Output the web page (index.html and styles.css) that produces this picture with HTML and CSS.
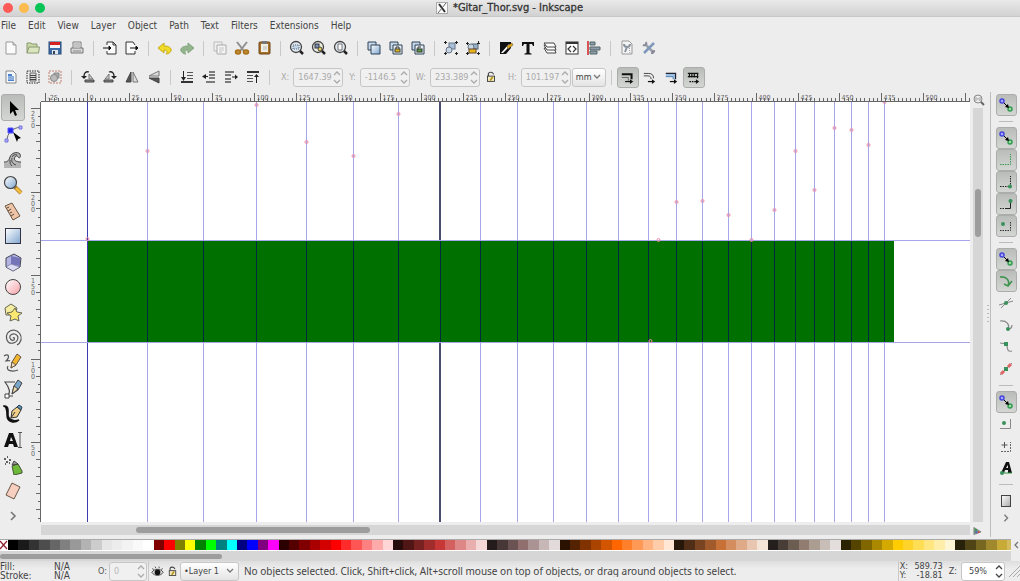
FILE: index.html
```html
<!DOCTYPE html>
<html lang="en">
<head>
<meta charset="utf-8">
<title>*Gitar_Thor.svg - Inkscape</title>
<link rel="stylesheet" href="styles.css">
</head>
<body>
<svg class="defs" aria-hidden="true">
<defs>
<linearGradient id="gBlue" x1="0" y1="0" x2="1" y2="1"><stop offset="0" stop-color="#fff"/><stop offset="1" stop-color="#7fa6cf"/></linearGradient>
<linearGradient id="gGrey" x1="0" y1="0" x2="1" y2="1"><stop offset="0" stop-color="#fff"/><stop offset="1" stop-color="#aaa"/></linearGradient>
<linearGradient id="gPink" x1="0" y1="0" x2="1" y2="1"><stop offset="0" stop-color="#fff"/><stop offset="1" stop-color="#f7a0a8"/></linearGradient>
</defs>
<symbol id="new" viewBox="0 0 16 16"><path d="M3 2h7l3 3v9H3z" fill="#fbfbfb" stroke="#999"/><path d="M10 2v3h3" fill="#ddd" stroke="#999"/></symbol>
<symbol id="open" viewBox="0 0 16 16"><path d="M2 13V3h4l1 1h5v3" fill="#c9d8a8" stroke="#8a9a70"/><path d="M2 13l2-6h10.500l-1 6z" fill="#dbe6c0" stroke="#8a9a70"/></symbol>
<symbol id="save" viewBox="0 0 16 16"><rect x="2" y="2" width="12" height="12" fill="#3c6ca8" stroke="#274a78"/><rect x="3" y="2" width="10" height="3" fill="#d62020"/><rect x="3" y="5" width="10" height="3" fill="#f4f4f4"/><rect x="5" y="10" width="6" height="4" fill="#dfe6ee"/><rect x="6" y="11" width="2" height="3" fill="#345"/></symbol>
<symbol id="print" viewBox="0 0 16 16"><path d="M4 8V2h8v6" fill="#fff" stroke="#777"/><path d="M2 8h12v5H2z" fill="#d8d8d8" stroke="#777"/><path d="M5 4h6M5 6h6M4 11h8" stroke="#888"/></symbol>
<symbol id="import" viewBox="0 0 16 16"><path d="M5 5V2h6l3 3v9H5v-3" fill="#fafafa" stroke="#333"/><path d="M11 2v3h3" fill="none" stroke="#333"/><path d="M1 8h7M7 6l2 2-2 2z" fill="#111" stroke="#111"/></symbol>
<symbol id="export" viewBox="0 0 16 16"><path d="M11 5L9 2H2v12h9v-3" fill="#fafafa" stroke="#333"/><path d="M6 8h7M12 6l2 2-2 2z" fill="#111" stroke="#111"/></symbol>
<symbol id="undo" viewBox="0 0 16 16"><path d="M1 8l6-5v3c5 0 8 2 7 5-1 2-3 3-5 3 2-2 1-4-2-4v3z" fill="#f0dc28" stroke="#c9ab1a"/></symbol>
<symbol id="redo" viewBox="0 0 16 16"><path d="M15 8L9 3v3C4 6 1 8 2 11c1 2 3 3 5 3-2-2-1-4 2-4v3z" fill="#93b58c" stroke="#86a580"/></symbol>
<symbol id="copy" viewBox="0 0 16 16"><path d="M2 2h8v9H2z" fill="#eee" stroke="#bbb"/><path d="M5 5h9v9H5z" fill="#f5f5f5" stroke="#aaa"/><path d="M7 8h5M7 10h5M7 12h3" stroke="#c4c4c4"/></symbol>
<symbol id="cut" viewBox="0 0 16 16"><path d="M3 2l7 9M13 2l-7 9" stroke="#909090" stroke-width="2"/><ellipse cx="4" cy="12" rx="2.500" ry="2" fill="#c08a30" stroke="#a87018" stroke-width="1.500"/><ellipse cx="12" cy="12" rx="2.500" ry="2" fill="#c08a30" stroke="#a87018" stroke-width="1.500"/></symbol>
<symbol id="paste" viewBox="0 0 16 16"><rect x="3" y="2" width="11" height="12" rx="1" fill="#a8722c" stroke="#6e4716"/><rect x="5" y="4" width="7" height="8" fill="#f0ede4"/><rect x="6" y="1" width="5" height="3" fill="#777"/><path d="M7 7h4M7 9h4" stroke="#bbb"/></symbol>
<symbol id="zoomsel" viewBox="0 0 16 16"><circle cx="7" cy="7" r="5.500" fill="#dfe8f2" stroke="#444" stroke-width="1.300"/><path d="M11 11l3 3" stroke="#222" stroke-width="2.500"/><path d="M4 5h6v4H4z" fill="#c3d2e4" stroke="#567" stroke-dasharray="1 1"/></symbol>
<symbol id="zoomdraw" viewBox="0 0 16 16"><circle cx="7" cy="7" r="5.500" fill="#eef0e0" stroke="#444" stroke-width="1.300"/><path d="M11 11l3 3" stroke="#222" stroke-width="2.500"/><rect x="4" y="4" width="4" height="4" fill="#7d8fb0" stroke="#334"/><circle cx="9" cy="9" r="2" fill="#e8cf50" stroke="#444"/></symbol>
<symbol id="zoompage" viewBox="0 0 16 16"><circle cx="7" cy="7" r="5.500" fill="#dfe8f2" stroke="#444" stroke-width="1.300"/><path d="M11 11l3 3" stroke="#222" stroke-width="2.500"/><path d="M5 4h4v6H5z" fill="#fff" stroke="#777"/></symbol>
<symbol id="dup" viewBox="0 0 16 16"><path d="M2 2h8v8H2z" fill="#c8d8e8" stroke="#2c4258"/><path d="M5 5h9v9H5z" fill="url(#gBlue)" stroke="#2c4258"/></symbol>
<symbol id="clone" viewBox="0 0 16 16"><path d="M2 2h8v8H2z" fill="#c8d8e8" stroke="#2c4258"/><path d="M5 5h9v9H5z" fill="#e8eef4" stroke="#2c4258"/><path d="M8 9V7h3v2" fill="none" stroke="#333"/><rect x="7" y="9" width="5" height="3" fill="#e8b820" stroke="#443"/></symbol>
<symbol id="unlink" viewBox="0 0 16 16"><path d="M2 2h8v8H2z" fill="#c8d8e8" stroke="#2c4258"/><path d="M5 5h9v9H5z" fill="#e8eef4" stroke="#2c4258"/><path d="M8 9V7h3" fill="none" stroke="#333"/><rect x="7" y="9" width="5" height="3" fill="#64a04c" stroke="#232"/></symbol>
<symbol id="group" viewBox="0 0 16 16"><rect x="6" y="3" width="6" height="6" fill="#a9c0d8" stroke="#678"/><circle cx="6" cy="10" r="3" fill="#c8d6e4" stroke="#678"/><path d="M1 2.500h3M2.500 1v3M12 2.500h3M13.500 1v3M1 13.500h3M2.500 12v3M12 13.500h3M13.500 12v3" stroke="#222"/></symbol>
<symbol id="ungroup" viewBox="0 0 16 16"><rect x="7" y="4" width="6" height="5" fill="#9ab0c8" stroke="#567"/><circle cx="6" cy="7" r="3" fill="#c8d6e4" stroke="#678"/><rect x="4" y="9" width="7" height="4" fill="#e8b818" stroke="#643"/><path d="M1 3.500h3M2.500 2v3M12 3.500h3M13.500 1v3M1 13.500h3M2.500 12v3M12 13.500h3M13.500 12v3" stroke="#222"/></symbol>
<symbol id="fill" viewBox="0 0 16 16"><path d="M2 2h11v6L8 14H2z" fill="#111"/><path d="M3 13L11 4l1 2-7 7z" fill="#fff"/><path d="M9 6l5-3 1 2-5 4z" fill="#e0a820" stroke="#542" stroke-width=".5"/></symbol>
<symbol id="textdlg" viewBox="0 0 16 16"><path d="M2 2h12v4h-1L12 4H9.500v9l2 .5v1h-7v-1l2-.5V4H4L3 6H2z" fill="#111"/></symbol>
<symbol id="layers" viewBox="0 0 16 16"><g fill="#fff" stroke="#444"><path d="M2 8l3 5h9l-2-5z"/><path d="M2 5l3 5h9l-2-5z"/><path d="M2 3l3 4h9l-2-4z"/></g></symbol>
<symbol id="xml" viewBox="0 0 16 16"><rect x="2" y="2" width="12" height="12" fill="#fff" stroke="#333"/><path d="M2 3h12" stroke="#333" stroke-width="2"/><path d="M7 6L4 9l3 3M9 6l3 3-3 3" fill="none" stroke="#333" stroke-width="1.200"/></symbol>
<symbol id="align" viewBox="0 0 16 16"><path d="M2 1v14" stroke="#c22" stroke-width="1.500"/><path d="M4 2h5v3H4zM4 7h10v3H4zM4 11h7v3H4z" fill="#8d9cac" stroke="#566"/></symbol>
<symbol id="docprefs" viewBox="0 0 16 16"><path d="M3 1h7l3 3v10H3z" fill="#f4f4f4" stroke="#999"/><path d="M5 4c0 4 6 4 6 0M8 7l-2 5" fill="none" stroke="#8894a0" stroke-width="2"/><path d="M10 6l1 7" stroke="#999" stroke-dasharray="1 1"/></symbol>
<symbol id="prefs" viewBox="0 0 16 16"><path d="M4 4l9 9" stroke="#9aa2ac" stroke-width="2.500"/><path d="M13 3L3 13" stroke="#8098bc" stroke-width="2.500"/><path d="M2 5c2 1 4-1 3-3M11 14c0-2 1-3 3-3" fill="none" stroke="#889" stroke-width="2"/></symbol>
<symbol id="selall" viewBox="0 0 16 16"><path d="M3 2h7l3 3v9H3z" fill="#f4f7fb" stroke="#888"/><path d="M5 5h4v2h2v5H5z" fill="#4d82cf"/><path d="M5 8h6M5 10h6" stroke="#cde"/></symbol>
<symbol id="sellayers" viewBox="0 0 16 16"><path d="M2 2h12v12H2z" fill="none" stroke="#222" stroke-dasharray="1.500 1"/><path d="M5 4h6v8H5z" fill="#ddd" stroke="#666"/><path d="M5 6.500h6M5 8.500h6M5 10.500h6" stroke="#444"/></symbol>
<symbol id="desel" viewBox="0 0 16 16"><path d="M2 2h12v12H2z" fill="none" stroke="#c08070" stroke-dasharray="2 1"/><path d="M7 4h5v5H7z" fill="#aaa" stroke="#888"/><circle cx="7" cy="9" r="3.500" fill="#bcbcbc" stroke="#888"/></symbol>
<symbol id="rotl" viewBox="0 0 16 16"><path d="M5 11h9v2H5z" fill="#888" stroke="#444"/><path d="M9 10V5l4 5z" fill="#ccc" stroke="#777"/><path d="M9 3C6 2 4 4 4 7" fill="none" stroke="#222" stroke-width="1.300"/><path d="M1 7h6l-3 3z" fill="#222"/></symbol>
<symbol id="rotr" viewBox="0 0 16 16"><path d="M2 11h9v2H2z" fill="#888" stroke="#444"/><path d="M7 10V5l-4 5z" fill="#ccc" stroke="#777"/><path d="M7 3c3-1 5 1 5 4" fill="none" stroke="#222" stroke-width="1.300"/><path d="M9 7h6l-3 3z" fill="#222"/></symbol>
<symbol id="fliph" viewBox="0 0 16 16"><path d="M7 3v10H2z" fill="#555" stroke="#444"/><path d="M9 3v10h5z" fill="#ddd" stroke="#777"/></symbol>
<symbol id="flipv" viewBox="0 0 16 16"><path d="M13 2v5H3z" fill="#ddd" stroke="#777"/><path d="M13 14V9H3z" fill="#555" stroke="#444"/></symbol>
<symbol id="bottom" viewBox="0 0 16 16"><path d="M4.500 2v7" stroke="#222"/><path d="M2 8h5l-2.500 4z" fill="#222"/><path d="M8 3.500h6M8 6.500h6M8 9.500h6" stroke="#555"/><path d="M2 13h12" stroke="#333" stroke-width="2"/></symbol>
<symbol id="lower" viewBox="0 0 16 16"><path d="M8 3h6M8 6h6M8 9h6M5 13h9" stroke="#555" stroke-width="1.500"/><path d="M7 7.500H4" stroke="#222"/><path d="M5 5v5L1 7.500z" fill="#222"/></symbol>
<symbol id="raise" viewBox="0 0 16 16"><path d="M2 3h9M2 6h6M2 10h6M2 13h6" stroke="#555" stroke-width="1.500"/><path d="M9 8h4" stroke="#222"/><path d="M12 5.500v5L15 8z" fill="#222"/></symbol>
<symbol id="top" viewBox="0 0 16 16"><path d="M2 3h12" stroke="#333" stroke-width="2"/><path d="M2 6.500h6M2 9.500h6M2 12.500h6" stroke="#555"/><path d="M11.500 7v7" stroke="#222"/><path d="M9 8h5l-2.500-3z" fill="#222"/></symbol>
<symbol id="lock" viewBox="0 0 16 16"><path d="M5 7V4c1-2 5-2 6 1" fill="none" stroke="#444" stroke-width="1.300"/><rect x="4" y="7" width="8" height="6" fill="#f2ecc0" stroke="#333"/><path d="M7 12l3-4" stroke="#b89018" stroke-width="2"/></symbol>
<symbol id="eye" viewBox="0 0 16 16"><path d="M1 9c3-5 11-5 14 0-3 5-11 5-14 0z" fill="#ddd" stroke="#333"/><circle cx="8" cy="9" r="3.500" fill="#111"/><path d="M3 6L2 4M6 4L5 2M10 4V2M13 6l1-2" stroke="#333"/></symbol>
<symbol id="t1" viewBox="0 0 16 16"><path d="M1 4h12v6" fill="none" stroke="#111" stroke-width="2.500"/><path d="M1 8h8v4" fill="none" stroke="#555"/><path d="M5 13h8" stroke="#111" stroke-width="1.500"/><path d="M11 10l4 3-4 3z" fill="#111"/></symbol>
<symbol id="t2" viewBox="0 0 16 16"><path d="M1 3h6c4 0 6 2 6 6M1 6h5c3 0 4 2 4 4" fill="none" stroke="#444" stroke-width="1.200"/><path d="M6 13h7" stroke="#111" stroke-width="1.500"/><path d="M11 10l4 3-4 3z" fill="#111"/></symbol>
<symbol id="t3" viewBox="0 0 16 16"><path d="M1 3h12v7h-3V7H1z" fill="#9cc0e4"/><path d="M1 3h12v7" fill="none" stroke="#223" stroke-width="1.500"/><path d="M1 7h9v3" fill="none" stroke="#47a"/><path d="M6 13h7" stroke="#111" stroke-width="1.500"/><path d="M11 10l4 3-4 3z" fill="#111"/></symbol>
<symbol id="t4" viewBox="0 0 16 16"><path d="M1 3h13M1 7h13M3 2v6M6 2v6M9 2v6M13 2v7" stroke="#111" stroke-width="1.500"/><path d="M3 13h9" stroke="#111" stroke-width="1.500" stroke-dasharray="2 1"/><path d="M11 10l4 3-4 3z" fill="#111"/></symbol>
<symbol id="arrow" viewBox="0 0 20 20"><path d="M7 3v13l3-3 2 5 2-1-2-5h4z" fill="#000"/></symbol>
<symbol id="node" viewBox="0 0 20 20"><path d="M4 17C4 9 9 4 18 3" fill="none" stroke="#666"/><path d="M2 15h3v3H2zM16 2h3v3h-3z" fill="#aaf" stroke="#77d"/><path d="M5 4h5v5H5z" fill="#22e" stroke="#55f"/><path d="M10 8l8 6-3 1-1 3z" fill="#000"/></symbol>
<symbol id="tweak" viewBox="0 0 20 20"><path d="M1 12c4 0 5-2 6-5 1-4 7-6 10-3 1 2 0 4-1 4-1-2-3-3-4-1-2 3 1 5 6 5v6H1z" fill="#b4b4b4"/><path d="M1 12c4 0 5-2 6-5 1-4 7-6 10-3 1 2 0 4-1 4-1-2-3-3-4-1-2 3 1 5 6 5M9 7c1-2 3-3 5-2M9 8c-1 4 1 6 4 7M7 10c0 3 0 4 2 6" fill="none" stroke="#444"/></symbol>
<symbol id="zoomtool" viewBox="0 0 20 20"><path d="M12 12l6 6" stroke="#9a7430" stroke-width="4"/><path d="M13 13l5 5" stroke="#f5bd3a" stroke-width="3"/><circle cx="7.500" cy="7.500" r="6" fill="url(#gBlue)" stroke="#444" stroke-width="1.200"/></symbol>
<symbol id="measure" viewBox="0 0 20 20"><path d="M2 5l7-3 8 13-7 4z" fill="#eec4a8" stroke="#654"/><path d="M4 7l2-1M5 10l3-2M7 12l2-1M8 15l3-2" stroke="#543"/></symbol>
<symbol id="rect" viewBox="0 0 20 20"><rect x="2.500" y="2.500" width="15" height="15" fill="url(#gBlue)" stroke="#334"/></symbol>
<symbol id="box3d" viewBox="0 0 20 20"><path d="M3 6l8-4 7 4-1 9-7 4-7-4z" fill="#b4b4e4" stroke="#445"/><path d="M8 12V4l9 2v8z" fill="#7474b8"/><path d="M3 15l5-3 9 3-7 4z" fill="#dcdcf4" stroke="#557" stroke-width=".5"/></symbol>
<symbol id="ellipse" viewBox="0 0 20 20"><circle cx="10" cy="10" r="7.500" fill="url(#gPink)" stroke="#444"/></symbol>
<symbol id="star" viewBox="0 0 20 20"><path d="M2 6l6-4 6 4-2 7H3z" fill="#f4eda0" stroke="#665"/><path d="M12 6l2 4 5 1-4 3 1 5-4-2-5 2 1-5-4-3 5-1z" fill="#fbe870" stroke="#665"/></symbol>
<symbol id="spiral" viewBox="0 0 20 20"><path d="M10 10c1-1 2 0 1 2-2 1-5-1-4-4 2-4 8-2 8 2-1 6-9 7-11 2-2-6 2-10 7-10 5 1 8 5 7 10-1 3-2 4-4 5" fill="none" stroke="#555" stroke-width="1.200"/></symbol>
<symbol id="pencil" viewBox="0 0 20 20"><path d="M1 3c5-3 6 1 2 5 2 0 3-1 4 0M5 13c-3 5 5 6 10 4" fill="none" stroke="#555" stroke-width="1.200"/><path d="M8 15l1-6 5-8 4 3-5 8z" fill="#f3b52e" stroke="#654"/><path d="M8 15l1-6 4 3z" fill="#f5e0c0" stroke="#654"/></symbol>
<symbol id="pen" viewBox="0 0 20 20"><path d="M3 17C9 15 6 8 2 3h10" fill="none" stroke="#444" stroke-width="1.200"/><path d="M2 15h4v4H2zM6 17h4" fill="#fff" stroke="#444"/><path d="M9 15l2-8 4-6 4 3-4 7z" fill="#7aa5cc" stroke="#444"/><path d="M9 15l2-8 4 3z" fill="#eee0b0" stroke="#444"/></symbol>
<symbol id="calli" viewBox="0 0 20 20"><path d="M1 2c5-1 4 5 4 9s4 7 11 5c-5 4-12 2-12-5 0-4 0-8-3-9z" fill="#111" stroke="#111" stroke-width="1.500"/><path d="M8 14l1-7 5-4 4 3-4 7z" fill="#f0d088" stroke="#333"/><path d="M14 3l2-2 3 2-1 3z" fill="#5a8fb0" stroke="#345"/><path d="M8 14l4-6" stroke="#333"/></symbol>
<symbol id="texttool" viewBox="0 0 20 20"><path d="M1 17L6 3h4l5 14h-4l-1-3H6l-1 3zM7 11h3L8 7z" fill="#111"/><path d="M15 2.500h4M17 2v16M15 17.500h4" stroke="#555"/></symbol>
<symbol id="spray" viewBox="0 0 20 20"><path d="M9 11l6-2 4 7v2l-8 2z" fill="#6eb83a" stroke="#453"/><path d="M9 10l2-4 4 3z" fill="#999" stroke="#444"/><path d="M1 4h2M4 2h1M3 7h2M6 5h2M2 9h1M6 8h1" stroke="#333" stroke-width="1.500"/></symbol>
<symbol id="eraser" viewBox="0 0 20 20"><path d="M9 2l8 4-6 12-8-4z" fill="#f7cfc0" stroke="#654"/></symbol>
<symbol id="more" viewBox="0 0 20 20"><path d="M8 6l4 4-4 4" fill="none" stroke="#777" stroke-width="1.600"/></symbol>
<symbol id="snap" viewBox="0 0 16 16"><circle cx="4" cy="4" r="2" fill="#aaf" stroke="#44d" stroke-width="1.500"/><circle cx="12" cy="12" r="2" fill="#9d9" stroke="#395" stroke-width="1.500"/><path d="M6 6l3 3" stroke="#000"/><path d="M7 10l4 1-1-4z" fill="#000"/></symbol>
<symbol id="sbox" viewBox="0 0 16 16"><path d="M2 12.500h10.500V2" fill="none" stroke="#3c9a50" stroke-dasharray="1.500 1"/></symbol>
<symbol id="sedge" viewBox="0 0 16 16"><path d="M2 12.500h10.500V2" fill="none" stroke="#222" stroke-dasharray="1.500 1"/><circle cx="12" cy="12.500" r="2" fill="#38905a"/></symbol>
<symbol id="scorner" viewBox="0 0 16 16"><path d="M2 12.500h6" stroke="#222" stroke-dasharray="1.500 1"/><path d="M8 12.500h4.500V3" fill="none" stroke="#222"/><circle cx="12.500" cy="5" r="2" fill="#38905a"/></symbol>
<symbol id="smid" viewBox="0 0 16 16"><path d="M2 12.500h10.500V3" fill="none" stroke="#333" stroke-dasharray="1.500 1"/><circle cx="5" cy="6" r="2" fill="#38905a"/></symbol>
<symbol id="spath" viewBox="0 0 16 16"><path d="M2 4c7-1 10 4 8 9M6 11l4 2 4-5" fill="none" stroke="#3f9450" stroke-width="1.600"/></symbol>
<symbol id="sint" viewBox="0 0 16 16"><path d="M3 13L13 3M1 10l14-4" stroke="#888"/><circle cx="8" cy="8" r="2" fill="#38905a"/></symbol>
<symbol id="scusp" viewBox="0 0 16 16"><path d="M2 4c7-1 10 4 8 8 2 0 4-1 4-4" fill="none" stroke="#888" stroke-width="1.200"/><circle cx="10" cy="12" r="2" fill="#38905a"/></symbol>
<symbol id="ssmooth" viewBox="0 0 16 16"><path d="M2 4l7 1c0 6 1 8 5 7" fill="none" stroke="#888" stroke-width="1.200"/><path d="M6 3h4v4H6z" fill="#38905a"/></symbol>
<symbol id="sline" viewBox="0 0 16 16"><path d="M2 14L14 2" stroke="#888"/><path d="M3 13l3-3M10 6l3-3" stroke="#d66" stroke-width="3"/><path d="M6 6h4v4H6z" fill="#38905a"/></symbol>
<symbol id="scenter" viewBox="0 0 16 16"><path d="M2 12.500h10.500V3" fill="none" stroke="#888"/><circle cx="6" cy="7" r="2" fill="#38905a"/></symbol>
<symbol id="srot" viewBox="0 0 16 16"><path d="M3 13.500h9.500V4" fill="none" stroke="#666" stroke-dasharray="2 1"/><path d="M6.500 4v6M3.500 7h6" stroke="#555"/></symbol>
<symbol id="stext" viewBox="0 0 16 16"><path d="M3 13L8 2h3l3 11h-4v-3H7l-1 3zM8 8h2V5z" fill="#111"/><path d="M3 13h11" stroke="#2f9440"/><circle cx="4" cy="13" r="2" fill="#38905a"/></symbol>
<symbol id="spage" viewBox="0 0 16 16"><rect x="3.500" y="2.500" width="9" height="11" fill="url(#gGrey)" stroke="#444"/></symbol>
<symbol id="up" viewBox="0 0 8 6"><path d="M1 5l3-3 3 3" fill="none" stroke="currentColor" stroke-width="1.300"/></symbol>
<symbol id="down" viewBox="0 0 8 6"><path d="M1 1l3 3 3-3" fill="none" stroke="currentColor" stroke-width="1.300"/></symbol>
</svg>

<header class="titlebar">
  <div class="lights"><button class="light red" aria-label="Close"></button><button class="light amber" aria-label="Minimize"></button><button class="light green" aria-label="Zoom"></button></div>
  <h1 class="title"><svg class="xicon" viewBox="0 0 12 12"><rect x=".5" y=".5" width="11" height="11" fill="#fafafa" stroke="#aaa"/><path d="M3 2l6 8" stroke="#333" stroke-width="2"/><path d="M10 1L2 11" stroke="#666"/></svg>*Gitar_Thor.svg - Inkscape</h1>
</header>

<nav class="menubar">
  <button>File</button><button>Edit</button><button>View</button><button>Layer</button><button>Object</button><button>Path</button><button>Text</button><button>Filters</button><button>Extensions</button><button>Help</button>
</nav>

<div class="toolbar commands">
  <button aria-label="New"><svg><use href="#new"/></svg></button><button aria-label="Open"><svg><use href="#open"/></svg></button><button aria-label="Save"><svg><use href="#save"/></svg></button><button aria-label="Print"><svg><use href="#print"/></svg></button><i class="sep"></i>
  <button aria-label="Import"><svg><use href="#import"/></svg></button><button aria-label="Export"><svg><use href="#export"/></svg></button><i class="sep"></i>
  <button aria-label="Undo"><svg><use href="#undo"/></svg></button><button aria-label="Redo"><svg><use href="#redo"/></svg></button><i class="sep"></i>
  <button aria-label="Copy"><svg><use href="#copy"/></svg></button><button aria-label="Cut"><svg><use href="#cut"/></svg></button><button aria-label="Paste"><svg><use href="#paste"/></svg></button><i class="sep"></i>
  <button aria-label="Zoom selection"><svg><use href="#zoomsel"/></svg></button><button aria-label="Zoom drawing"><svg><use href="#zoomdraw"/></svg></button><button aria-label="Zoom page"><svg><use href="#zoompage"/></svg></button><i class="sep"></i>
  <button aria-label="Duplicate"><svg><use href="#dup"/></svg></button><button aria-label="Clone"><svg><use href="#clone"/></svg></button><button aria-label="Unlink clone"><svg><use href="#unlink"/></svg></button><i class="sep"></i>
  <button aria-label="Group"><svg><use href="#group"/></svg></button><button aria-label="Ungroup"><svg><use href="#ungroup"/></svg></button><i class="sep"></i>
  <button aria-label="Fill and stroke"><svg><use href="#fill"/></svg></button><button aria-label="Text and font"><svg><use href="#textdlg"/></svg></button><button aria-label="Layers"><svg><use href="#layers"/></svg></button><button aria-label="XML editor"><svg><use href="#xml"/></svg></button><button aria-label="Align"><svg><use href="#align"/></svg></button><i class="sep"></i>
  <button aria-label="Document properties"><svg><use href="#docprefs"/></svg></button><button aria-label="Preferences"><svg><use href="#prefs"/></svg></button>
</div>

<div class="toolbar controls">
  <button aria-label="Select all"><svg><use href="#selall"/></svg></button><button aria-label="Select in all layers"><svg><use href="#sellayers"/></svg></button><button aria-label="Deselect"><svg><use href="#desel"/></svg></button><i class="sep"></i>
  <button aria-label="Rotate left"><svg><use href="#rotl"/></svg></button><button aria-label="Rotate right"><svg><use href="#rotr"/></svg></button><button aria-label="Flip horizontal"><svg><use href="#fliph"/></svg></button><button aria-label="Flip vertical"><svg><use href="#flipv"/></svg></button><i class="sep"></i>
  <button aria-label="Lower to bottom"><svg><use href="#bottom"/></svg></button><button aria-label="Lower"><svg><use href="#lower"/></svg></button><button aria-label="Raise"><svg><use href="#raise"/></svg></button><button aria-label="Raise to top"><svg><use href="#top"/></svg></button><i class="sep"></i>
  <label class="field"><span>X:</span><span class="spin"><input value="1647.39" disabled><span class="arrows"><svg><use href="#up"/></svg><svg><use href="#down"/></svg></span></span></label>
  <label class="field"><span>Y:</span><span class="spin"><input value="-1146.5" disabled><span class="arrows"><svg><use href="#up"/></svg><svg><use href="#down"/></svg></span></span></label>
  <label class="field"><span>W:</span><span class="spin"><input value="233.389" disabled><span class="arrows"><svg><use href="#up"/></svg><svg><use href="#down"/></svg></span></span></label>
  <button class="lockbtn" aria-label="Lock ratio"><svg><use href="#lock"/></svg></button>
  <label class="field"><span>H:</span><span class="spin"><input value="101.197" disabled><span class="arrows"><svg><use href="#up"/></svg><svg><use href="#down"/></svg></span></span></label>
  <span class="drop unit"><select aria-label="Unit"><option>mm</option></select><svg><use href="#down"/></svg></span><i class="sep"></i>
  <button class="affect on" aria-label="Scale stroke"><svg><use href="#t1"/></svg></button><button class="affect" aria-label="Scale corners"><svg><use href="#t2"/></svg></button><button class="affect" aria-label="Move gradients"><svg><use href="#t3"/></svg></button><button class="affect on" aria-label="Move patterns"><svg><use href="#t4"/></svg></button>
</div>

<main class="work">
  <div class="toolbox">
    <button class="on" aria-label="Select"><svg><use href="#arrow"/></svg></button><button aria-label="Node"><svg><use href="#node"/></svg></button><button aria-label="Tweak"><svg><use href="#tweak"/></svg></button><button aria-label="Zoom"><svg><use href="#zoomtool"/></svg></button><button aria-label="Measure"><svg><use href="#measure"/></svg></button><button aria-label="Rectangle"><svg><use href="#rect"/></svg></button><button aria-label="3D box"><svg><use href="#box3d"/></svg></button><button aria-label="Ellipse"><svg><use href="#ellipse"/></svg></button><button aria-label="Star"><svg><use href="#star"/></svg></button><button aria-label="Spiral"><svg><use href="#spiral"/></svg></button><button aria-label="Pencil"><svg><use href="#pencil"/></svg></button><button aria-label="Pen"><svg><use href="#pen"/></svg></button><button aria-label="Calligraphy"><svg><use href="#calli"/></svg></button><button aria-label="Text"><svg><use href="#texttool"/></svg></button><button aria-label="Spray"><svg><use href="#spray"/></svg></button><button aria-label="Eraser"><svg><use href="#eraser"/></svg></button><button aria-label="More tools"><svg><use href="#more"/></svg></button>
  </div>
  <svg class="hruler" id="hruler"></svg>
  <svg class="vruler" id="vruler"></svg>
  <svg class="canvas" id="canvas"></svg>
  <svg class="zoomcorner" viewBox="0 0 12 12"><circle cx="5" cy="5" r="4" fill="#eee" stroke="#888"/><path d="M3 3v4M5 4v2M7 3v4" stroke="#999"/><path d="M8 8l3 3" stroke="#666" stroke-width="2"/></svg>
  <div class="vscroll"><div class="vtrack"><i class="before"></i><i class="thumb"></i><i class="after"></i></div><div class="grip"></div></div>
  <div class="hscroll"><i class="before"></i><i class="thumb"></i><i class="after"></i></div>
  <svg class="cms" viewBox="0 0 10 10"><path d="M1 1l8 5-8 3z" fill="#7a9a88" stroke="#888"/><path d="M2 2l3 2-3 2z" fill="#3a9a50"/><path d="M6 5l2 1-3 2z" fill="#d45"/><path d="M2 6l3-1-1 3z" fill="#55c"/></svg>
  <div class="snapbar">
    <button class="on" aria-label="Enable snapping"><svg><use href="#snap"/></svg></button><i class="hsep"></i>
    <button class="on" aria-label="Snap bounding boxes"><svg><use href="#snap"/></svg></button><button class="on" aria-label="Snap box edges"><svg><use href="#sbox"/></svg></button><button class="on" aria-label="Snap box corners"><svg><use href="#sedge"/></svg></button><button class="on" aria-label="Snap edge midpoints"><svg><use href="#scorner"/></svg></button><button class="on" aria-label="Snap box centers"><svg><use href="#smid"/></svg></button><i class="hsep"></i>
    <button class="on" aria-label="Snap nodes"><svg><use href="#snap"/></svg></button><button class="on" aria-label="Snap paths"><svg><use href="#spath"/></svg></button><button aria-label="Snap intersections"><svg><use href="#sint"/></svg></button><button aria-label="Snap cusp nodes"><svg><use href="#scusp"/></svg></button><button aria-label="Snap smooth nodes"><svg><use href="#ssmooth"/></svg></button><button aria-label="Snap line midpoints"><svg><use href="#sline"/></svg></button><i class="hsep"></i>
    <button class="on" aria-label="Snap others"><svg><use href="#snap"/></svg></button><button aria-label="Snap object centers"><svg><use href="#scenter"/></svg></button><button aria-label="Snap rotation centers"><svg><use href="#srot"/></svg></button><button aria-label="Snap text baseline"><svg><use href="#stext"/></svg></button><i class="hsep"></i>
    <button aria-label="Snap page border"><svg><use href="#spage"/></svg></button><button class="short" aria-label="More snapping"><svg><use href="#more"/></svg></button>
  </div>
</main>

<div class="palette">
  <div class="swatches" id="swatches"><svg class="none" viewBox="0 0 8 10"><path d="M0 1l7 8M7 1L0 9" stroke="#8c2030" stroke-width="1.200"/></svg></div>
  <button class="palmenu" aria-label="Palette menu"><svg viewBox="0 0 8 8"><path d="M6 1L3 4l3 3" fill="none" stroke="#777" stroke-width="1.300"/></svg></button>
  <div class="palscroll"><i class="thumb"></i></div>
</div>

<footer class="status">
  <dl class="style"><dt>Fill:</dt><dd>N/A</dd><dt>Stroke:</dt><dd>N/A</dd></dl>
  <label class="field opacity"><span>O:</span><span class="spin"><input value="0" disabled><span class="arrows"><svg><use href="#up"/></svg><svg><use href="#down"/></svg></span></span></label>
  <i class="sep"></i>
  <button aria-label="Layer visibility"><svg><use href="#eye"/></svg></button><button aria-label="Layer lock"><svg><use href="#lock"/></svg></button>
  <span class="drop layer"><select aria-label="Layer"><option>•Layer 1</option></select><svg><use href="#down"/></svg></span>
  <p class="message">No objects selected. Click, Shift+click, Alt+scroll mouse on top of objects, or drag around objects to select.</p>
  <i class="sep"></i>
  <dl class="coords"><dt>X:</dt><dd>589.73</dd><dt>Y:</dt><dd>-18.81</dd></dl>
  <label class="field zoom"><span>Z:</span><span class="spin"><input value="59%"><span class="arrows"><svg><use href="#up"/></svg><svg><use href="#down"/></svg></span></span></label>
  <svg class="resize" viewBox="0 0 12 12"><path d="M1 12L12 1M5 12l7-7M9 12l3-3" stroke="#aaa"/></svg>
</footer>
<script src="app.js"></script>
</body>
</html>
```
FILE: styles.css
```css
* { box-sizing: border-box; }
body { margin: 0; height: 100vh; display: flex; flex-direction: column; overflow: hidden; background: #ededed; color: #444; font-family: "DejaVu Sans Condensed", "DejaVu Sans", sans-serif; font-stretch: condensed; font-size: 10px; line-height: 12px; }
button, input, select { font: inherit; color: inherit; margin: 0; padding: 0; border: 0; background: none; }
button { display: flex; align-items: center; justify-content: center; }
.defs { position: absolute; width: 0; height: 0; }

.titlebar { flex: none; display: grid; grid-template-columns: 1fr auto 1fr; align-items: center; height: 17px; padding: 0 4px 0 3px; background: linear-gradient(#e9e9e9, #d2d2d2); border-bottom: 1px solid #c8c8c8; }
.lights { display: flex; gap: 6px; }
.light { width: 10px; height: 10px; border-radius: 50%; }
.red { background: #fc5b57; }
.amber { background: #fdbc4e; }
.green { background: #06c455; }
.title { display: flex; align-items: center; gap: 5px; margin: 0; font-size: 11px; font-weight: 400; color: #333; -webkit-text-stroke: .3px #333; }
.xicon { width: 12px; height: 12px; }

.menubar { flex: none; display: flex; gap: 12px; height: 17px; padding: 0 1px; }

.toolbar { flex: none; display: flex; align-items: center; height: 28px; }
.controls { height: 30px; }
.toolbar > button { width: 22px; height: 21px; }
.toolbar > button svg { width: 16px; height: 16px; }
.toolbar > .affect svg { width: 13px; height: 13px; }
.sep { flex: none; width: 1px; height: 15px; margin: 0 5px; background: #c9c9c9; }
.on { background: linear-gradient(#b9bcb9, #d4d6d4); border: 1px solid #aaadaa; border-radius: 3px; }

.field { display: flex; align-items: center; gap: 4px; margin-left: 6px; font-size: 9px; color: #aaa; }
.spin, .drop { display: flex; align-items: center; height: 19px; border: 1px solid #c6c6c6; border-radius: 3px; background: #f0f0f0; }
.spin { width: 50px; padding-left: 4px; }
.spin input { flex: 1; min-width: 0; width: 0; height: 17px; }
.arrows { display: flex; flex-direction: column; gap: 3px; margin: 0 1px; }
.arrows svg { width: 8px; height: 6px; }
.toolbar > .lockbtn svg { width: 14px; height: 14px; }
.drop { position: relative; background: linear-gradient(#fff, #e4e4e4); font-size: 9px; }
.drop select { appearance: none; width: 100%; height: 17px; padding: 0 3px; }
.drop svg { position: absolute; right: 4px; width: 8px; height: 6px; pointer-events: none; color: #777; }
.unit { width: 34px; margin-left: 1px; }

.work { flex: 1; min-height: 0; display: grid; grid-template-columns: 28px 13px minmax(0, 1fr) 20px 30px; grid-template-rows: 10px minmax(0, 1fr) 15px; }
.toolbox { grid-area: 1 / 1 / 4 / 2; display: flex; flex-direction: column; padding: 2px 3px 8px 1px; }
.toolbox button { flex: 1; }
.toolbox svg { width: 20px; height: 20px; }
.hruler { grid-area: 1 / 3; width: 100%; height: 100%; border-bottom: 1px solid #666; }
.vruler { grid-area: 2 / 2; width: 100%; height: 100%; border-right: 1px solid #666; }
.tick { stroke: #666; }
.num { font-size: 7px; fill: #666; }
.canvas { grid-area: 2 / 3; width: 100%; height: 100%; background: #fff; }
.guide { stroke: #a6a6ea; }
.inner { stroke: #002b40; }
.edge { stroke: #3c3cb0; }
.octave { stroke: #4c4c6c; stroke-width: 2; }
.anchor { fill: none; stroke: #ee8aa4; }
.zoomcorner { grid-area: 1 / 4; width: 12px; height: 12px; margin: 2px 0 0 3px; }
.vscroll { grid-area: 2 / 4; display: flex; justify-content: space-between; align-items: center; padding: 6px 1px 0 3px; }
.vtrack { width: 10px; height: 100%; display: flex; flex-direction: column; align-items: center; background: #d6d6d6; }
.vtrack .before { flex: 81; }
.vtrack .thumb { flex: 48; width: 6px; }
.vtrack .after { flex: 285; }
.thumb { border-radius: 3px; background: #9c9d9c; }
.grip { width: 2px; height: 20px; background: repeating-linear-gradient(#bbb 0 1px, transparent 1px 4px); }
.hscroll { grid-area: 3 / 3; display: flex; align-items: center; height: 10px; margin-top: 3px; background: #d6d6d6; }
.hscroll .before { flex: 95; }
.hscroll .thumb { flex: 234; height: 6px; }
.hscroll .after { flex: 600; }
.cms { grid-area: 3 / 4; width: 9px; height: 10px; margin: 4px 0 0 3px; }
.snapbar { grid-area: 1 / 5 / 4 / 6; display: flex; flex-direction: column; align-items: center; padding: 2px 0 0 1px; border-left: 1px solid #bdbdbd; overflow: hidden; }
.snapbar button { flex: none; width: 21px; height: 22px; }
.snapbar svg { width: 16px; height: 16px; }
.snapbar .short { height: 12px; }
.hsep { flex: none; width: 14px; height: 1px; margin: 5px 0; background: #bbb; }

.palette { flex: none; display: grid; grid-template-columns: minmax(0, 1fr) 9px; grid-template-rows: 12px 10px; padding-top: 2px; }
.swatches { display: flex; border-top: 1px solid #aaa; border-bottom: 1px solid #fff; background: #fff; }
.swatches .none { flex: none; width: 8px; height: 10px; }
.swatch { flex: 1; }
.swatch.partial { flex: .4; }
.palmenu svg { width: 8px; height: 8px; }
.palscroll { display: flex; align-items: center; background: #d6d6d6; }
.palscroll .thumb { width: 22%; height: 5px; }

.status { flex: none; display: flex; align-items: center; height: 20px; overflow: hidden; background: linear-gradient(#dedede, #ededed 8px); }
.status dl { display: grid; margin: 0; line-height: 9px; }
.status dt, .status dd { margin: 0; }
.style { grid-template-columns: 54px 38px; height: 18px; }
.coords { grid-template-columns: 12px 31px; height: 18px; font-size: 9px; }
.coords dd { text-align: right; }
.opacity { gap: 2px; }
.opacity span { color: #555; }
.opacity .spin { width: 38px; }
.opacity .arrows { color: #aaa; }
.opacity input { color: #b8b8b8; }
.status .sep { height: 20px; margin: 0 1px; }
.status button { width: 15px; height: 16px; }
.status button svg { width: 13px; height: 13px; }
.layer { width: 59px; }
.message { flex: 1; min-width: 0; margin: 0 0 0 5px; font-family: "Noto Sans", sans-serif; font-stretch: normal; white-space: nowrap; overflow: hidden; }
.zoom { color: #444; }
.zoom .spin { width: 44px; background: #fff; padding-left: 7px; }
.resize { flex: none; width: 12px; height: 12px; margin-left: 3px; }
```
FILE: app.js
```js
const NS = 'http://www.w3.org/2000/svg';
function add(parent, name, attrs, text) {
  const el = document.createElementNS(NS, name);
  for (const key in attrs) el.setAttribute(key, attrs[key]);
  if (text !== undefined) el.textContent = text;
  parent.appendChild(el);
}
function line(parent, cls, x1, y1, x2, y2) {
  add(parent, 'line', { class: cls, x1, y1, x2, y2 });
}

// Rulers, in millimetres
const scale = 1.672;
const hruler = document.getElementById('hruler');
const rulerEnd = hruler.getBoundingClientRect().width;
for (let i = -10; 46 + i * 2.5 * scale < rulerEnd; i++) {
  const x = Math.round(46 + i * 2.5 * scale) + 0.5;
  line(hruler, 'tick', x, i % 10 === 0 ? 1 : 6, x, 10);
  if (i % 10 === 0 && x + 14 < rulerEnd) add(hruler, 'text', { class: 'num', x: x + 2, y: 8 }, String(i * 2.5));
}
const vruler = document.getElementById('vruler');
for (let i = -20; i < 51; i++) {
  const y = Math.round(424 - i * 5 * scale) + 0.5;
  const major = i % 10 === 0;
  line(vruler, 'tick', major ? 3 : i % 2 === 0 ? 8 : 10, y, 13, y);
  if (major && i > 0) {
    [...String(i * 5)].forEach((digit, n) => add(vruler, 'text', { class: 'num', x: 3, y: y + 7 + n * 6 }, digit));
  }
}

// Fretboard with its guides
const canvas = document.getElementById('canvas');
add(canvas, 'rect', { x: 46, y: 138, width: 807, height: 102, fill: '#007100' });
const frets = [106, 162, 215, 265, 312, 357, 399, 439, 476, 512, 545, 577, 607, 635, 661, 687, 710, 733, 754, 773, 793, 810, 827, 843];
line(canvas, 'octave', 399, 0, 399, 138);
line(canvas, 'octave', 399, 240, 399, '100%');
for (const x of frets) {
  if (x !== 399) line(canvas, 'guide', x + 0.5, 0, x + 0.5, '100%');
  line(canvas, 'inner', x + 0.5, 138, x + 0.5, 240);
}
line(canvas, 'edge', 46.5, 0, 46.5, '100%');
line(canvas, 'guide', 0, 138.5, '100%', 138.5);
line(canvas, 'guide', 0, 240.5, '100%', 240.5);
const anchors = [[46, 137], [106, 49], [215, 3], [265, 40], [312, 54], [357, 12], [617, 138], [609, 239], [635, 100], [661, 99], [687, 113], [710, 138], [733, 108], [754, 49], [773, 88], [793, 26], [810, 28], [827, 43], [843, 0]];
for (const [x, y] of anchors) add(canvas, 'circle', { class: 'anchor', cx: x + 0.5, cy: y, r: 1.5 });

// Colour palette
const colours = `000000 1a1a1a 333333 4d4d4d 666666 808080 999999 b3b3b3 cccccc e6e6e6 ececec f2f2f2 f9f9f9 ffffff
800000 ff0000 808000 ffff00 008000 00ff00 008080 00ffff 000080 0000ff 800080 ff00ff
2b0000 550000 800000 aa0000 d40000 ff0000 ff2a2a ff5555 ff8080 ffaaaa ffd5d5
280b0b 501616 782121 a02c2c c83737 d35f5f de8787 e9afaf f4d7d7
241c1c 483737 6c5353 916f6f ac9393 c8b7b7 e3dbdb
2b1100 552200 803300 aa4400 d45500 ff6600 ff7f2a ff9955 ffb380 ffccaa ffe6d5
28170b 502d16 784421 a05a2c c87137 d38d5f deaa87 e9c6af f4e3d7
241f1c 483e37 6c5d53 917c6f ac9d93 c8beb7 e3dedb
2b2200 554400 806600 aa8800 d4aa00 ffcc00 ffd42a ffdd55 ffe680 ffeeaa fff6d5
28220b 504416 786721 a0892c c8ab37 d3bc5f`.split(/\s+/);
const swatches = document.getElementById('swatches');
colours.forEach((c, n) => {
  const s = document.createElement('span');
  s.className = n === colours.length - 1 ? 'swatch partial' : 'swatch';
  s.style.background = '#' + c;
  swatches.appendChild(s);
});
```
